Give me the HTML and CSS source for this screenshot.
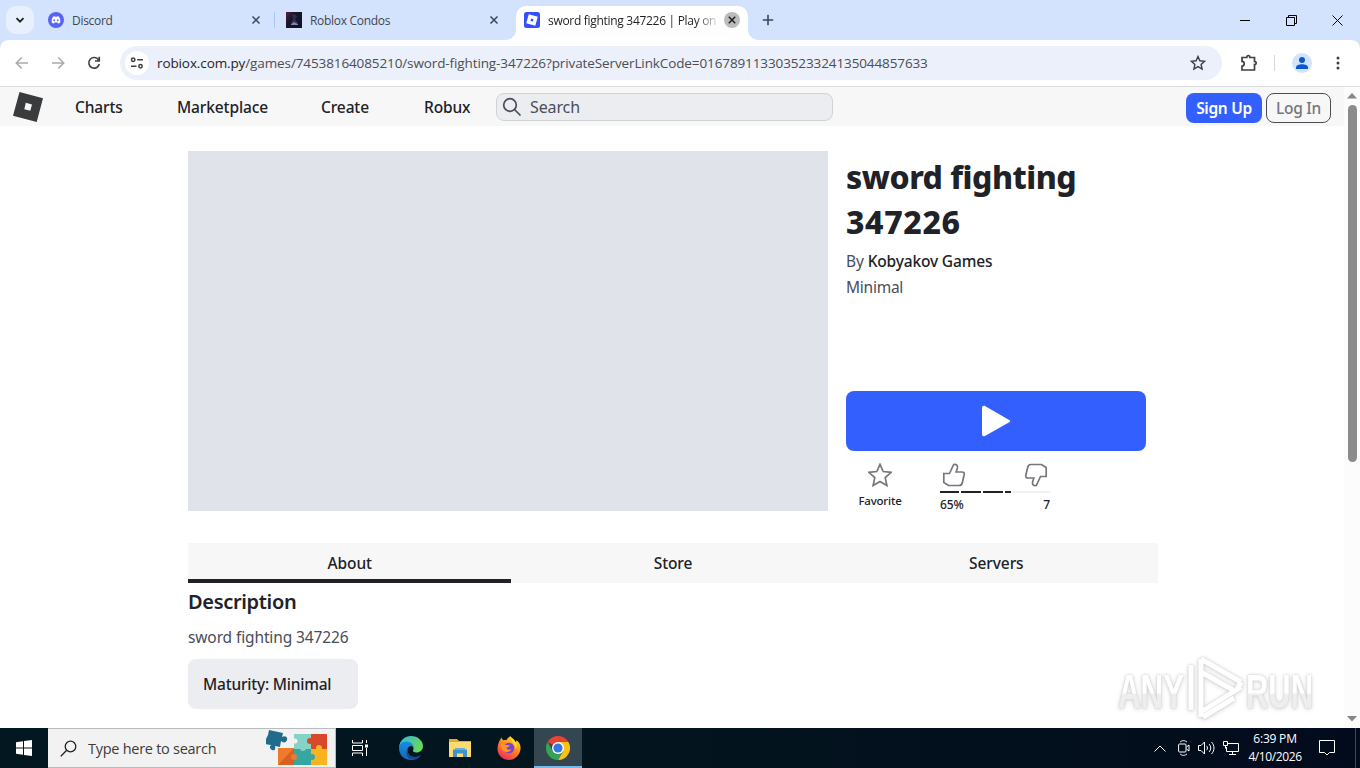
FILE: index.html
```
<!DOCTYPE html>
<html lang="en">

<head>
    <meta charset="utf-8" />
    <title>sword fighting 347226 | Play on Roblox</title>
    <link rel="stylesheet" href="styles.css">
</head>

<body>
    <!-- tab strip -->
    <header class="tabstrip">
        <button class="tab-search"><svg width="10" height="10" viewBox="0 0 10 10"><path d="M1.5 3.2 5 6.7 8.5 3.2" fill="none" stroke="#1f1f1f" stroke-width="1.8" /></svg></button>
        <div class="tab tab-discord">
            <svg class="favicon" viewBox="0 0 16 16"><circle cx="8" cy="8" r="8" fill="#5865f2" /><path d="M5.2 4.6 6.7 4.2l.4.6h1.8l.4-.6 1.5.4c1.2 1.7 1.7 3.700 1.5 5.800-.7.6-1.4.9-2.200 1.100l-.6-1H6.500l-.6 1c-.8-.2-1.500-.5-2.200-1.100-.2-2.100.3-4.100 1.500-5.800z" fill="#fff" /><ellipse cx="6.200" cy="8.300" rx=".9" ry="1" fill="#5865f2" /><ellipse cx="9.800" cy="8.300" rx=".9" ry="1" fill="#5865f2" /></svg>
            <span class="tab-title">Discord</span>
            <svg class="tab-x" viewBox="0 0 16 16"><path d="m4.500 4.500 7 7m0-7-7 7" /></svg>
        </div>
        <div class="tab-sep"></div>
        <div class="tab tab-condos">
            <svg class="favicon" viewBox="0 0 16 16">
                <defs><linearGradient id="condo" x1="0" y1="0" x2="1" y2=".6"><stop offset="0" stop-color="#5a2140" /><stop offset=".4" stop-color="#19152c" /><stop offset="1" stop-color="#11132a" /></linearGradient></defs>
                <path d="M0 0h16v16H0z" fill="url(#condo)" /><path d="m6 3 3-1 2 3-2 2 3 4H5l2-4z" fill="#2f2e52" /><path d="m5 12 3-2 4 2v1H5z" fill="#8582a8" />
            </svg>
            <span class="tab-title">Roblox Condos</span>
            <svg class="tab-x" viewBox="0 0 16 16"><path d="m4.500 4.500 7 7m0-7-7 7" /></svg>
        </div>
        <div class="tab tab-active">
            <svg class="favicon" viewBox="0 0 16 16"><rect width="16" height="16" rx="2.500" fill="#3350fa" /><path fill-rule="evenodd" d="M4.800 2.200 13.800 4.700 11.300 13.800 2.200 11.300zM7.200 6.500 6.500 8.900 8.900 9.500 9.500 7.200z" fill="#fff" /></svg>
            <span class="tab-title fade">sword fighting 347226 | Play on</span>
            <svg class="tab-x tab-x-on" viewBox="0 0 16 16"><circle cx="8" cy="8" r="8" /><path d="m4.800 4.800 6.400 6.400m0-6.400-6.400 6.400" /></svg>
        </div>
        <svg class="new-tab" viewBox="0 0 12 12"><path d="M6 .8v10.400M.8 6h10.400" fill="none" stroke="#3d4653" stroke-width="1.600" /></svg>
        <div class="win-controls">
            <svg viewBox="0 0 11 11"><path d="M0 5.500h10" /></svg>
            <svg viewBox="0 0 11 11"><path d="M.5 2.500h8v8h-8zM2.500 2.500v-2h8v8h-2" /></svg>
            <svg viewBox="0 0 11 11"><path d="m.5.5 10 10m0-10-10 10" /></svg>
        </div>
    </header>

    <!-- toolbar -->
    <div class="toolbar">
        <svg class="tb-icon off" viewBox="0 0 16 16"><path d="M14 8H2.500M7.800 2.500 2.300 8l5.500 5.500" /></svg>
        <svg class="tb-icon off" viewBox="0 0 16 16"><path d="M2 8h11.500M8.200 2.500 13.700 8l-5.500 5.500" /></svg>
        <svg class="tb-icon reload" viewBox="0 0 16 16"><path d="M12.600 5A5.300 5.300 0 1 0 13.300 9M13.300 1.800v4.200H9" /></svg>
        <div class="omnibox">
            <span class="site-info"><svg width="14" height="12" viewBox="0 0 14 12"><path d="M7.200 2.800H13M1 9.200h5.500" /><circle cx="3.200" cy="2.800" r="1.700" /><circle cx="10.500" cy="9.200" r="1.700" /></svg></span>
            <span class="url"><b>robiox.com.py</b>/games/74538164085210/sword-fighting-347226?privateServerLinkCode=016789113303523324135044857633</span>
            <svg class="bookmark" viewBox="0 0 16 16"><path d="m8 1.500 1.900 4.300 4.700.5-3.500 3.100 1 4.600L8 11.600 3.900 14l1-4.600L1.400 6.300l4.700-.5z" /></svg>
        </div>
        <svg class="puzzle" viewBox="0 0 18 18"><path d="M2 3.500h4.800c-.3-2.600 3.400-2.600 3.100 0h4.600v4c2.200-.3 2.200 3.300 0 3v5.500H2v-3.800c3-.2 3-4.600 0-4.800z" /></svg>
        <span class="tb-sep"></span>
        <svg class="avatar" viewBox="0 0 20 20"><circle cx="10" cy="10" r="10" fill="#d3e3fd" /><circle cx="10" cy="7" r="3" fill="#0b57d0" /><path d="M4 16v-1.500c0-2 3-3.200 6-3.200s6 1.200 6 3.200V16z" fill="#0b57d0" /></svg>
        <svg class="kebab" viewBox="0 0 4 14"><circle cx="2" cy="2" r="1.500" /><circle cx="2" cy="7" r="1.500" /><circle cx="2" cy="12" r="1.500" /></svg>
    </div>

    <!-- page -->
    <div class="viewport">
        <div class="page">
            <nav class="site-nav">
                <svg class="logo" viewBox="0 0 30 30"><path fill-rule="evenodd" d="M6.500 0 30 6.300 23.700 30 0 23.700zM12.800 10.700 11.300 17.200 17.300 18.800 19 12.500z" fill="#393b3d" /></svg>
                <a class="nav-charts">Charts</a>
                <a class="nav-market">Marketplace</a>
                <a class="nav-create">Create</a>
                <a class="nav-robux">Robux</a>
                <div class="site-search">
                    <svg width="20" height="20" viewBox="0 0 20 20"><circle cx="8" cy="8" r="6.300" /><path d="m12.500 12.500 6 6" /></svg>
                    <span>Search</span>
                </div>
                <button class="btn signup">Sign Up</button>
                <button class="btn login">Log In</button>
            </nav>

            <main class="content">
                <section class="game">
                    <div class="thumb"></div>
                    <div class="info">
                        <h1>sword fighting<br><span class="digits">347226</span></h1>
                        <p class="by">By <b>Kobyakov Games</b></p>
                        <p class="rating">Minimal</p>
                        <button class="play"><svg width="30" height="32" viewBox="0 0 30 32"><path d="M1 3.200C1 1 2.700.3 4.400 1.300L28.200 14.900c1.300.8 1.300 1.600 0 2.300L4.400 30.800C2.700 31.800 1 31 1 28.900z" fill="#fff" /></svg></button>
                        <div class="social">
                            <div class="favorite">
                                <svg width="24" height="24" viewBox="0 0 24 24"><path d="m12 1.300 3.200 7.200 8 .8-6 5.300 1.700 7.900L12 18.400l-6.900 4.100 1.700-7.900-6-5.300 8-.8z" /></svg>
                                <span>Favorite</span>
                            </div>
                            <div class="votes">
                                <div class="thumbs">
                                    <svg width="24" height="24" viewBox="0 0 24 24"><path id="thumb" d="M1.800 10.500H7.500L11.700 1.500C14.500 1 16 2.600 15.400 5L14.200 9H20c1.600 0 2.500 1 2.200 2.500L20.500 19C20.200 21 19 22.500 17 22.500H6.500L1.800 19.500Z" /></svg>
                                    <svg width="24" height="24" viewBox="0 0 24 24"><use href="#thumb" transform="rotate(180 12 12)" /></svg>
                                </div>
                                <div class="vote-bar"><i></i><i></i><i></i><i></i></div>
                                <div class="vote-num"><span>65%</span><span>7</span></div>
                            </div>
                        </div>
                    </div>
                </section>

                <div class="tabs">
                    <a class="on">About</a>
                    <a>Store</a>
                    <a>Servers</a>
                </div>
                <h2>Description</h2>
                <p class="desc">sword fighting 347226</p>
                <div class="maturity"><span>Maturity: Minimal</span></div>
            </main>
        </div>
        <div class="scrollbar">
            <svg width="10" height="6" viewBox="0 0 10 6"><path d="m5 0 5 5.500H0z" /></svg>
            <span class="scroll-thumb"></span>
            <svg width="10" height="6" viewBox="0 0 10 6"><path d="M5 5.500 0 0h10z" /></svg>
        </div>
        <svg class="watermark" width="220" height="72" viewBox="0 0 220 72">
            <defs><linearGradient id="wm-fill" x1="0" y1="0" x2="0" y2="1"><stop offset=".52" stop-color="#fff" /><stop offset=".56" stop-color="#eee" /></linearGradient></defs>
            <g class="wm">
                <text x="4" y="55" textLength="66" lengthAdjust="spacingAndGlyphs">ANY</text>
                <text x="132" y="55" textLength="67" lengthAdjust="spacingAndGlyphs">RUN</text>
                <path d="M77 12v45M87 6v58M87 6l40 23M87 19l32 18M127 34 87 59M127 29l-5 9M89 64l31-19" />
            </g>
        </svg>
    </div>

    <!-- taskbar -->
    <footer class="taskbar">
        <span class="start"><svg width="16" height="16" viewBox="0 0 16 16"><path d="M0 2.200 7 1.200v6.300H0zM8 1 16 0v7.500H8zM0 8.500h7v6.300l-7-1zM8 8.500h8V16l-8-1z" fill="#fff" /></svg></span>
        <div class="win-search">
            <svg class="mag" width="17" height="17" viewBox="0 0 17 17"><circle cx="10.500" cy="6.500" r="5.300" /><path d="M6.700 10.300.8 16.200" /></svg>
            <span>Type here to search</span>
            <svg class="jigsaw" width="62" height="36" viewBox="0 0 62 36">
                <path d="M12 18h16v17H12z" fill="#ed7b2b" /><path d="m12 35 16-17v17z" fill="#d95f22" />
                <path d="M28 4h17v15H28z" fill="#84d3c4" /><path d="M45 4h16v15H45z" fill="#d9482b" />
                <path d="M28 19h17v16H28z" fill="#37a6a0" /><path d="M45 19h16v16H45z" fill="#f7b41e" />
                <circle cx="37" cy="18" r="3" fill="#84d3c4" /><circle cx="44" cy="11" r="3" fill="#d9482b" /><circle cx="53" cy="18" r="3" fill="#f7b41e" /><circle cx="46" cy="27" r="3" fill="#37a6a0" /><circle cx="28" cy="27" r="3" fill="#ed7b2b" /><circle cx="29" cy="11" r="2.500" fill="#f2f2f2" />
                <path d="M3 0 17 3l-1 4c3-2 6 0 5 3s-4 3-6 1l-1 6-5-1c1 4-1 5-3 4s-3-3-1-5l-6-1 1-5 2-4z" fill="#216c8d" />
            </svg>
        </div>
        <div class="tasks">
            <span class="task task-view"><svg width="16" height="16" viewBox="0 0 16 16"><path d="M.5 0v3h10V0M.5 5.500h10v5H.5zM.5 16v-3h10v3M14.500 0v3M14.500 8v8" fill="none" stroke="#fff" /><path d="M13 4.500h3v3h-3z" fill="#fff" /></svg></span>
            <span class="task"><svg width="24" height="24" viewBox="0 0 24 24">
                    <defs>
                        <linearGradient id="edge1" x1="0" y1="0" x2="1" y2=".4"><stop offset="0" stop-color="#2fb5e8" /><stop offset="1" stop-color="#67d85a" /></linearGradient>
                        <linearGradient id="edge2" x1="0" y1="0" x2="0" y2="1"><stop offset="0" stop-color="#168ee0" /><stop offset="1" stop-color="#1666b7" /></linearGradient>
                    </defs>
                    <path d="M0 11C1 4 6 0 12 0c7 0 12 5 12 10 0 4-3 6.500-6.500 6.500-3 0-4-1.200-3.300-2.500 1-2 .2-6-4.200-6C5 8 1 9 0 11z" fill="url(#edge1)" />
                    <path d="M0 12c0-4 4-7 8-6.500 4 .2 6.500 3 6 5.500-2-2-5-1-5.500 2.500-.6 4 3 8 8 7.500 2 0 4-1 5.500-2-2.500 3.500-6 5-10 5C5 24 0 19 0 12z" fill="url(#edge2)" />
                    <path d="M8.500 13.500c-.6 4 3 8 8 7.500 2 0 4-1 5.500-2-2 3-5 4.500-8 4.500-5 0-8.500-5-5.500-10z" fill="#124d91" />
                </svg></span>
            <span class="task"><svg width="22" height="20" viewBox="0 0 22 20"><path d="M0 1h8l2 2h12v15H0z" fill="#e8a72d" /><path d="M0 4h22v15H0z" fill="#fddb70" /><path d="M4 19v-7.500h14V19h-4v-3.500H8V19z" fill="#3d93ca" /><path d="M6 10h10v2H6z" fill="#63b0dc" /></svg></span>
            <span class="task"><svg width="24" height="24" viewBox="0 0 24 24">
                    <defs><linearGradient id="fox" x1=".8" y1="0" x2=".2" y2="1"><stop offset="0" stop-color="#ffe226" /><stop offset=".45" stop-color="#ff8a1e" /><stop offset="1" stop-color="#f0205e" /></linearGradient></defs>
                    <path d="M3 4c.5-1 1-1.800 1.500-2.500.3 1.200 1 2 2 2.700 1-.3 2-.4 3-.2C10.500 2 12 .8 14 .3c-.4 2 1 3 3 4.200.6.400 1 1 1.200 1.800.8-.3 1.200-1 1.300-2C22.500 6.500 24 9.500 23.500 13c-.5 6-5.500 11-11.500 11S.5 19.500.5 13C.5 9.500 1.500 6.500 3 4z" fill="url(#fox)" />
                    <circle cx="12" cy="12" r="5.300" fill="#7542d6" />
                    <path d="M3.500 8.500c2-1 4-.5 5.500.5 1.500-.3 3 0 4 .8-1 1.500-3 1.200-3.500 2.200.5 2 3 2 5 1-1.500 3.500-5.500 4-8 2-2-1.500-3-4-3-6.500z" fill="#ff9326" />
                    <path d="M14 1c-1 4 4 5 4.500 12 2-3 2-7-4.500-12z" fill="#ffdf2b" />
                </svg></span>
            <span class="task current"><svg width="24" height="24" viewBox="0 0 24 24"><path d="M12 12 1.600 6A12 12 0 0 1 22.400 6z" fill="#e94235" /><path d="M12 12V6h10.400A12 12 0 0 1 12 24l5.200-9z" fill="#fbc116" /><path d="m6.800 15-5.200-9A12 12 0 0 0 12 24l5.200-9z" fill="#34a353" /><circle cx="12" cy="12" r="6" fill="#fff" /><circle cx="12" cy="12" r="4.600" fill="#3578e5" /></svg></span>
        </div>
        <div class="tray">
            <svg width="12" height="7" viewBox="0 0 12 7"><path d="M.5 6.500 6 1l5.500 5.500" /></svg>
            <svg width="12" height="16" viewBox="0 0 12 16"><rect x=".6" y="4" width="7.400" height="8" rx="1" /><path d="m8.500 7 2.500-2v6L8.500 9M2 2.200C4 0 7 .2 9 2.200M2 13.800c2 2.200 5 2 7 0" /></svg>
            <svg width="17" height="14" viewBox="0 0 17 14"><path d="M.5 4.500h2.500L6.500 1v12L3 9.500H.5zM8.500 4.800c1.300 1.300 1.300 3.100 0 4.400M11 3c2.300 2.300 2.300 5.700 0 8M13.500 1c3.300 3.500 3.300 8.500 0 12" /></svg>
            <svg width="16" height="14" viewBox="0 0 16 14"><path d="M5 2.500h10.500v8H3.500V6M9.500 10.500v3M6 13.500h7M.5.5h4v4h-4zM2.500 4.500v3" /></svg>
            <div class="clock"><span>6:39 PM</span><span class="date">4/10/2026</span></div>
            <svg class="notes" width="16" height="16" viewBox="0 0 16 16"><path d="M.5.5h15v12h-5L8 15l-2.500-2.500h-5z" /></svg>
        </div>
    </footer>
</body>

</html>
```

FILE: styles.css
```
* {
    box-sizing: border-box;
}

body {
    margin: 0;
    width: 1360px;
    height: 768px;
    overflow: hidden;
    background: #fff;
    font-family: "Noto Sans", sans-serif;
    color: #202227;
}

svg {
    display: block;
    flex: none;
}

button {
    border: 0;
    padding: 0;
    font-family: inherit;
}

h1,
h2,
p {
    margin: 0;
}

/* tab strip */
.tabstrip {
    display: flex;
    align-items: center;
    height: 40px;
    padding-left: 6px;
    background: #d3e3fd;
    font-family: "Open Sans", sans-serif;
    font-size: 12px;
    letter-spacing: -0.3px;
}

.tab-search {
    display: flex;
    align-items: center;
    justify-content: center;
    width: 28px;
    height: 28px;
    border-radius: 10px;
    background: #e9f0fd;
}

.tab {
    display: flex;
    align-items: center;
    white-space: nowrap;
    color: #3d4653;
}

.tab-discord {
    width: 240px;
    padding: 0 10px 0 14px;
}

.tab-condos {
    width: 241px;
    padding: 0 14px 0 11px;
}

.tab-sep {
    width: 1px;
    height: 16px;
    background: #a8c7fa;
}

.tab-active {
    position: relative;
    width: 232px;
    height: 34px;
    margin-top: 6px;
    padding: 0 8px 6px;
    border-radius: 10px 10px 0 0;
    background: #fff;
    color: #1f1f1f;
}

.tab-active::before,
.tab-active::after {
    content: "";
    position: absolute;
    bottom: 0;
    width: 10px;
    height: 10px;
}

.tab-active::before {
    left: -10px;
    background: radial-gradient(circle at 0 0, #d3e3fd 9.5px, #fff 10px);
}

.tab-active::after {
    right: -10px;
    background: radial-gradient(circle at 100% 0, #d3e3fd 9.5px, #fff 10px);
}

.favicon {
    width: 16px;
    height: 16px;
}

.tab-title {
    flex: 1;
    margin-left: 8px;
    overflow: hidden;
}

.fade {
    -webkit-mask-image: linear-gradient(90deg, #000 148px, transparent 172px);
    mask-image: linear-gradient(90deg, #000 148px, transparent 172px);
}

.tab-x {
    width: 16px;
    height: 16px;
    fill: none;
    stroke: #3d4653;
    stroke-width: 1.5;
}

.tab-x-on {
    stroke: #1f1f1f;
}

.tab-x-on circle {
    fill: #bcbcbc;
    stroke: none;
}

.new-tab {
    width: 12px;
    height: 12px;
    margin-left: 14px;
}

.win-controls {
    display: flex;
    gap: 35px;
    margin-left: auto;
    padding-right: 17px;
}

.win-controls svg {
    width: 11px;
    height: 11px;
    fill: none;
    stroke: #000;
}

/* toolbar */
.toolbar {
    position: relative;
    display: flex;
    align-items: center;
    height: 46px;
    padding-left: 14px;
    background: #fff;
}

.toolbar::before,
.toolbar::after {
    content: "";
    position: absolute;
    top: 0;
    width: 8px;
    height: 8px;
}

.toolbar::before {
    left: 0;
    background: radial-gradient(circle at 100% 100%, #fff 7.5px, #d3e3fd 8px);
}

.toolbar::after {
    right: 0;
    background: radial-gradient(circle at 0 100%, #fff 7.5px, #d3e3fd 8px);
}

.tb-icon {
    width: 16px;
    height: 16px;
    margin-right: 20px;
    fill: none;
    stroke: #40434a;
    stroke-width: 1.6;
}

.tb-icon.off {
    stroke: #a9abae;
}

.tb-icon.reload {
    margin-right: 18px;
}

.omnibox {
    display: flex;
    align-items: center;
    width: 1102px;
    height: 34px;
    padding: 0 16px 0 5px;
    border-radius: 17px;
    background: #ecf0fa;
}

.site-info {
    display: flex;
    align-items: center;
    justify-content: center;
    width: 24px;
    height: 24px;
    border-radius: 12px;
    background: #fff;
}

.site-info svg,
.bookmark,
.puzzle {
    fill: none;
    stroke: #3c4043;
    stroke-width: 1.5;
}

.url {
    flex: 1;
    margin-left: 8px;
    padding-bottom: 1px;
    font-family: "Open Sans", sans-serif;
    font-size: 13.5px;
    letter-spacing: -0.11px;
    color: #4b4e53;
    white-space: nowrap;
}

.url b {
    font-weight: 400;
    color: #1f1f1f;
}

.bookmark {
    width: 16px;
    height: 16px;
    stroke-width: 1.4;
}

.puzzle {
    width: 18px;
    height: 18px;
    margin-left: 18px;
    stroke-width: 1.7;
}

.tb-sep {
    width: 1px;
    height: 16px;
    margin: 0 17px 0 16px;
    background: #d3d9e6;
}

.avatar {
    width: 20px;
    height: 20px;
}

.kebab {
    width: 4px;
    height: 14px;
    margin-left: 24px;
    fill: #3c4043;
}

/* page */
.viewport {
    position: relative;
    display: flex;
    height: 642px;
    border-top: 1px solid #dcdee0;
}

.page {
    width: 1344px;
}

.site-nav {
    display: flex;
    align-items: center;
    height: 39px;
    padding: 0 13px 0 13px;
    background: #f7f7f8;
    font-size: 15.5px;
    letter-spacing: -0.12px;
    font-weight: 500;
}

.logo {
    width: 30px;
    height: 30px;
    margin-right: 32px;
}

.nav-charts {
    width: 102px;
}

.nav-market {
    width: 144px;
}

.nav-create {
    width: 103px;
}

.nav-robux {
    width: 72px;
}

.site-search {
    display: flex;
    align-items: center;
    width: 337px;
    height: 28px;
    padding-left: 5px;
    gap: 8px;
    border: 1px solid #d0d2d6;
    border-radius: 8px;
    background: #ecedf0;
    color: #494d5a;
    font-size: 16px;
    font-weight: 400;
}

.site-search svg {
    fill: none;
    stroke: #494d5a;
    stroke-width: 1.7;
}

.btn {
    height: 30px;
    margin-top: 2px;
    border-radius: 8px;
    font-size: 15.5px;
    letter-spacing: -0.3px;
    font-weight: 600;
}

.signup {
    width: 76px;
    margin-left: auto;
    background: #335fff;
    color: #fff;
}

.login {
    width: 65px;
    margin-left: 4px;
    border: 1px solid #4a4c50;
    background: transparent;
    color: #74767c;
    font-weight: 500;
}

.content {
    width: 970px;
    margin: 25px 0 0 188px;
}

.game {
    display: flex;
    gap: 18px;
    height: 360px;
}

.thumb {
    width: 640px;
    height: 360px;
    background: #e1e3eb;
}

.info {
    width: 300px;
}

h1 {
    padding-top: 3px;
    font-size: 32px;
    line-height: 45px;
    font-weight: 800;
    letter-spacing: -0.5px;
}

.digits {
    letter-spacing: 0.6px;
}

.by,
.rating {
    font-size: 15.5px;
    letter-spacing: -0.12px;
    line-height: 26px;
    color: #494d5a;
}

.by {
    padding-top: 4px;
}

.by b {
    font-weight: 500;
    letter-spacing: -0.16px;
    color: #202227;
}

.rating {
    letter-spacing: -0.25px;
}

.play {
    display: flex;
    align-items: center;
    justify-content: center;
    width: 300px;
    height: 60px;
    margin-top: 91px;
    border-radius: 8px;
    background: #335fff;
}

.social {
    display: flex;
    padding: 12px 0 0 12px;
    font-size: 12px;
    line-height: 16px;
    font-weight: 500;
}

.social svg {
    fill: none;
    stroke: #75777c;
    stroke-width: 1.7;
}

.favorite {
    display: flex;
    flex-direction: column;
    align-items: center;
    width: 44px;
    gap: 6px;
    font-size: 11.5px;
    letter-spacing: -0.2px;
}

.votes {
    width: 110px;
    margin-left: 38px;
}

.thumbs {
    display: flex;
    justify-content: space-between;
    padding: 0 2px;
}

.vote-bar {
    display: grid;
    grid-template-columns: 19px 20px 20px 6px;
    gap: 2px;
    height: 2px;
    margin-top: 4px;
    background: linear-gradient(90deg, #fff 72px, #f1f1f1 72px);
}

.vote-bar i {
    background: #202227;
}

.vote-num {
    display: flex;
    justify-content: space-between;
    padding-top: 4px;
    letter-spacing: -0.1px;
}

.tabs {
    display: flex;
    height: 40px;
    margin-top: 32px;
    background: #f7f7f8;
    font-size: 15.5px;
    letter-spacing: -0.1px;
    font-weight: 500;
    text-align: center;
    line-height: 40px;
}

.tabs a {
    flex: 1;
}

.tabs .on {
    box-shadow: inset 0 -4px #202227;
}

h2 {
    padding-top: 5px;
    font-size: 20px;
    letter-spacing: -0.33px;
    line-height: 28px;
    font-weight: 600;
}

.desc {
    padding-top: 8px;
    font-size: 15.5px;
    letter-spacing: -0.12px;
    line-height: 26px;
    color: #494d5a;
}

.maturity {
    width: 170px;
    height: 50px;
    margin-top: 9px;
    padding-left: 15px;
    border-radius: 8px;
    background: #ecedf0;
    font-size: 15.5px;
    letter-spacing: -0.21px;
    font-weight: 500;
    line-height: 50px;
    white-space: nowrap;
}

.scrollbar {
    display: flex;
    flex-direction: column;
    align-items: center;
    width: 16px;
    padding: 6px 0 6px;
    background: #fcfcfc;
    fill: #868686;
}

.scroll-thumb {
    width: 9px;
    height: 357px;
    margin: 6px 0 auto;
    border-radius: 5px;
    background: #8b8b8b;
}

.watermark {
    position: absolute;
    left: 1114px;
    top: 566px;
    overflow: visible;
}

.wm {
    fill: url(#wm-fill);
    font-family: "Liberation Sans", sans-serif;
    font-size: 48px;
    font-weight: bold;
    filter: drop-shadow(0 0 1px #ccc) drop-shadow(0 1px 2px #ddd);
}

.wm path {
    fill: none;
    stroke: #fff;
    stroke-width: 5;
}

/* taskbar */
.taskbar {
    display: flex;
    height: 40px;
    background: linear-gradient(90deg, #02171f, #03141e 50%, #020b1c);
    font-family: "Open Sans", sans-serif;
}

.start,
.task {
    display: flex;
    align-items: center;
    justify-content: center;
    width: 48px;
}

.tasks {
    display: flex;
    gap: 1px;
}

.task-view {
    margin-right: 2px;
}

.current {
    background: #34464f;
    box-shadow: inset 0 -2px #76b9ed;
}

.win-search {
    display: flex;
    align-items: center;
    width: 288px;
    border: 1px solid #b9bcbe;
    border-left: 0;
    background: #f2f2f2;
    font-size: 14.5px;
    letter-spacing: -0.27px;
    color: #3c3c3c;
    padding: 0 7px 0 12px;
}

.mag {
    margin-right: 11px;
    fill: none;
    stroke: #222;
    stroke-width: 1.3;
}

.jigsaw {
    margin: -1px 0 0 auto;
}

.tray {
    display: flex;
    align-items: center;
    margin-left: auto;
    padding-right: 20px;
    margin-right: 4px;
    border-right: 1px solid #3f4856;
    color: #fff;
}

.tray svg {
    fill: none;
    stroke: #fff;
    margin-right: 8px;
}

.tray svg:first-child {
    margin-right: 12px;
}

.clock {
    display: flex;
    flex-direction: column;
    align-items: center;
    width: 54px;
    margin: 0 17px 0 1px;
    font-size: 12px;
    letter-spacing: -0.2px;
    line-height: 18px;
}

.date {
    letter-spacing: -0.4px;
}

.tray .notes {
    margin-right: 0;
}
```
